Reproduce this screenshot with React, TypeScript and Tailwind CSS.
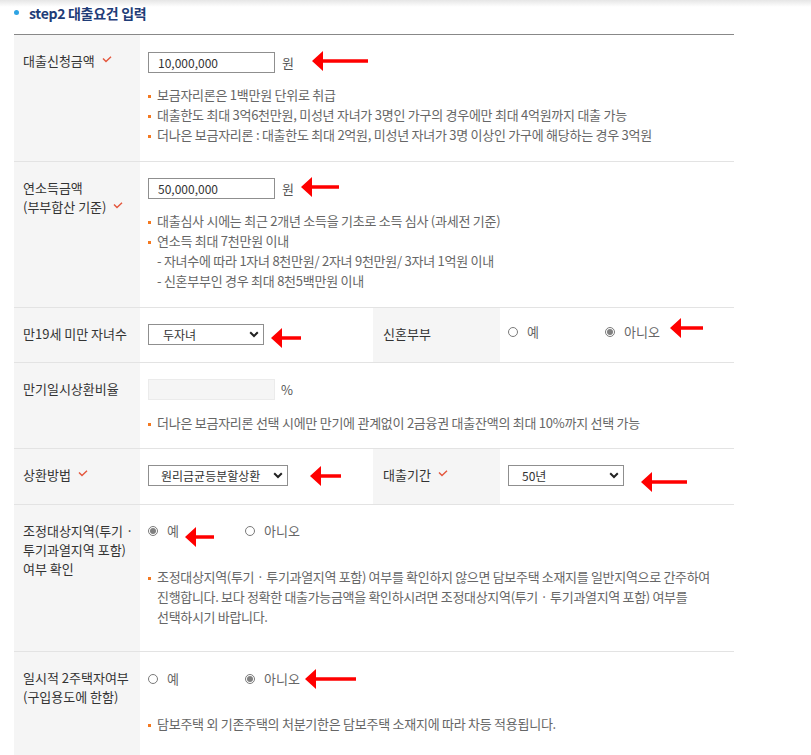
import React from "react";

function Check() {
  return (
    <svg width="10" height="7" viewBox="0 0 10 7" className="ml-[7px] inline-block -translate-y-[3px] align-middle">
      <polyline points="1,2.4 4,5.6 9,0.8" fill="none" stroke="#e4573d" strokeWidth="1.4" />
    </svg>
  );
}

function Arrow({ w, className = "" }: { w: number; className?: string }) {
  return (
    <svg width={w} height={22} viewBox={`0 0 ${w} 22`} className={`shrink-0 ${className}`}>
      <polygon points={`0,11 11,1 11,9.2 ${w},9.2 ${w},12.8 11,12.8 11,21`} fill="#ff0000" />
    </svg>
  );
}

function Radio({ checked = false }: { checked?: boolean }) {
  return (
    <span className="flex h-[10px] w-[10px] shrink-0 items-center justify-center rounded-full border border-[#7a7a7a] bg-white">
      {checked && <span className="h-[6px] w-[6px] rounded-full bg-[#808080]" />}
    </span>
  );
}

function Chevron() {
  return (
    <svg width="10" height="7" viewBox="0 0 10 7" className="shrink-0">
      <polyline points="1.2,1.3 5,5 8.8,1.3" fill="none" stroke="#222" strokeWidth="2" />
    </svg>
  );
}

function Select({ value, className }: { value: string; className: string }) {
  return (
    <div className={`flex h-[21px] shrink-0 items-center justify-between border border-[#8f8f8f] bg-white pl-[12px] pr-[4px] text-[12px] text-[#333] ${className}`}>
      <span>{value}</span>
      <Chevron />
    </div>
  );
}

function Bullet({ children }: { children: React.ReactNode }) {
  return (
    <li className="flex">
      <span className="mr-[6px] mt-[10px] h-[3px] w-[3px] shrink-0 bg-[#f47920]" />
      <span className="whitespace-nowrap">{children}</span>
    </li>
  );
}

function Label({ children, className = "" }: { children: React.ReactNode; className?: string }) {
  return (
    <div className={`bg-[#f5f5f5] pl-[9px] pt-[16px] text-[13px] leading-[19px] text-[#333] ${className}`}>
      {children}
    </div>
  );
}

function Option({ label, checked = false, arrow, wide = true }: { label: string; checked?: boolean; arrow?: React.ReactNode; wide?: boolean }) {
  return (
    <div className={`flex items-center ${wide ? "w-[97px]" : ""}`}>
      <Radio checked={checked} />
      <span className="ml-[9px] text-[13px] text-[#666]">{label}</span>
      {arrow}
    </div>
  );
}

const ulBase = "text-[13px] leading-[20px] text-[#666]";
const ulCls = `${ulBase} tracking-[-0.02em]`;

export default function App() {
  return (
    <div className="min-h-screen bg-white bg-[linear-gradient(#e6e6e6,#ffffff_7px)] font-['Noto_Sans_CJK_KR','Noto_Sans',sans-serif]">
      <div className="flex h-[34px] items-start pl-[14px] pt-[3px]">
        <div className="flex h-[20px] items-center">
          <span className="mr-[10px] h-[5px] w-[5px] -translate-y-[1px] rounded-full bg-[#2ea3e3]" />
          <span className="text-[14px] font-bold tracking-[-0.3px] text-[#1f3d78]">step2 대출요건 입력</span>
        </div>
      </div>

      <div className="ml-[14px] w-[720px] border-t border-[#888]">
        {/* Row 1 */}
        <div className="grid grid-cols-[126px_1fr] border-b border-[#e3e3e3]">
          <Label>
            대출신청금액
            <Check />
          </Label>
          <div className="pb-[16px] pl-[8px] pt-[17px]">
            <div className="flex h-[21px] items-center">
              <input readOnly defaultValue="10,000,000" className="h-[21px] w-[127px] border border-[#8f8f8f] px-[9px] text-[12px] text-[#333] outline-none" />
              <span className="ml-[7px] text-[13px] text-[#555]">원</span>
              <Arrow w={56} className="ml-[18px] -translate-y-[2px]" />
            </div>
            <ul className={`mt-[12px] ${ulCls}`}>
              <Bullet>보금자리론은 1백만원 단위로 취급</Bullet>
              <Bullet>대출한도 최대 3억6천만원, 미성년 자녀가 3명인 가구의 경우에만 최대 4억원까지 대출 가능</Bullet>
              <Bullet>더나은 보금자리론 : 대출한도 최대 2억원, 미성년 자녀가 3명 이상인 가구에 해당하는 경우 3억원</Bullet>
            </ul>
          </div>
        </div>

        {/* Row 2 */}
        <div className="grid grid-cols-[126px_1fr] border-b border-[#e3e3e3]">
          <Label>
            연소득금액
            <br />
            (부부합산 기준)
            <Check />
          </Label>
          <div className="pb-[16px] pl-[8px] pt-[16px]">
            <div className="flex h-[21px] items-center">
              <input readOnly defaultValue="50,000,000" className="h-[21px] w-[127px] border border-[#8f8f8f] px-[9px] text-[12px] text-[#333] outline-none" />
              <span className="ml-[7px] text-[13px] text-[#555]">원</span>
              <Arrow w={38} className="ml-[7px] -translate-y-[2px]" />
            </div>
            <ul className={`mt-[12px] ${ulCls}`}>
              <Bullet>대출심사 시에는 최근 2개년 소득을 기초로 소득 심사 (과세전 기준)</Bullet>
              <Bullet>연소득 최대 7천만원 이내</Bullet>
              <li className="whitespace-nowrap pl-[9px]">- 자녀수에 따라 1자녀 8천만원/ 2자녀 9천만원/ 3자녀 1억원 이내</li>
              <li className="whitespace-nowrap pl-[9px]">- 신혼부부인 경우 최대 8천5백만원 이내</li>
            </ul>
          </div>
        </div>

        {/* Row 3 */}
        <div className="grid grid-cols-[126px_233px_127px_1fr] border-b border-[#e3e3e3]">
          <Label>만19세 미만 자녀수</Label>
          <div className="pb-[17px] pl-[8px] pt-[16px]">
            <div className="flex h-[21px] items-center">
              <Select value="두자녀" className="w-[116px] pl-[14px]" />
              <Arrow w={30} className="ml-[7px] translate-y-[3px]" />
            </div>
          </div>
          <Label className="pl-[10px]">신혼부부</Label>
          <div className="pb-[17px] pl-[8px] pt-[13px]">
            <div className="flex h-[21px] items-center">
              <Option label="예" />
              <Option label="아니오" checked wide={false} arrow={<Arrow w={33} className="ml-[10px] -translate-y-[4px]" />} />
            </div>
          </div>
        </div>

        {/* Row 4 */}
        <div className="grid grid-cols-[126px_1fr] border-b border-[#e3e3e3]">
          <Label>만기일시상환비율</Label>
          <div className="pb-[15px] pl-[8px] pt-[16px]">
            <div className="flex h-[21px] items-center">
              <input readOnly disabled className="h-[21px] w-[127px] border border-[#ebebeb] bg-[#f5f5f5] px-[9px] text-[12px] outline-none" />
              <span className="ml-[6px] text-[13px] text-[#555]">%</span>
            </div>
            <ul className={`mt-[13px] ${ulCls}`}>
              <Bullet>더나은 보금자리론 선택 시에만 만기에 관계없이 2금융권 대출잔액의 최대 10%까지 선택 가능</Bullet>
            </ul>
          </div>
        </div>

        {/* Row 5 */}
        <div className="grid grid-cols-[126px_233px_127px_1fr] border-b border-[#e3e3e3]">
          <Label>
            상환방법
            <Check />
          </Label>
          <div className="pb-[18px] pl-[8px] pt-[16px]">
            <div className="flex h-[21px] items-center">
              <Select value="원리금균등분할상환" className="w-[140px]" />
              <Arrow w={31} className="ml-[22px]" />
            </div>
          </div>
          <Label className="pl-[10px]">
            대출기간
            <Check />
          </Label>
          <div className="pb-[18px] pl-[8px] pt-[16px]">
            <div className="flex h-[21px] items-center">
              <Select value="50년" className="w-[116px] pl-[13px]" />
              <Arrow w={46} className="ml-[17px] translate-y-[6px]" />
            </div>
          </div>
        </div>

        {/* Row 6 */}
        <div className="grid grid-cols-[126px_1fr] border-b border-[#e3e3e3]">
          <Label>
            조정대상지역(투기 ·
            <br />
            투기과열지역 포함)
            <br />
            여부 확인
          </Label>
          <div className="pb-[24px] pl-[8px] pt-[15px]">
            <div className="flex h-[21px] items-center">
              <Option label="예" checked arrow={<Arrow w={29} className="ml-[6px] translate-y-[6px]" />} />
              <Option label="아니오" wide={false} />
            </div>
            <ul className={`mt-[26px] ${ulBase} tracking-[-0.025em]`}>
              <Bullet>
                조정대상지역(투기 · 투기과열지역 포함) 여부를 확인하지 않으면 담보주택 소재지를 일반지역으로 간주하여
                <br />
                진행합니다. 보다 정확한 대출가능금액을 확인하시려면 조정대상지역(투기 · 투기과열지역 포함) 여부를
                <br />
                선택하시기 바랍니다.
              </Bullet>
            </ul>
          </div>
        </div>

        {/* Row 7 */}
        <div className="grid grid-cols-[126px_1fr] border-b border-[#e3e3e3]">
          <Label>
            일시적 2주택자여부
            <br />
            (구입용도에 한함)
          </Label>
          <div className="pb-[24px] pl-[8px] pt-[16px]">
            <div className="flex h-[21px] items-center">
              <Option label="예" />
              <Option label="아니오" checked wide={false} arrow={<Arrow w={51} className="ml-[5px]" />} />
            </div>
            <ul className={`mt-[25px] ${ulCls}`}>
              <Bullet>담보주택 외 기존주택의 처분기한은 담보주택 소재지에 따라 차등 적용됩니다.</Bullet>
            </ul>
          </div>
        </div>
      </div>
    </div>
  );
}
